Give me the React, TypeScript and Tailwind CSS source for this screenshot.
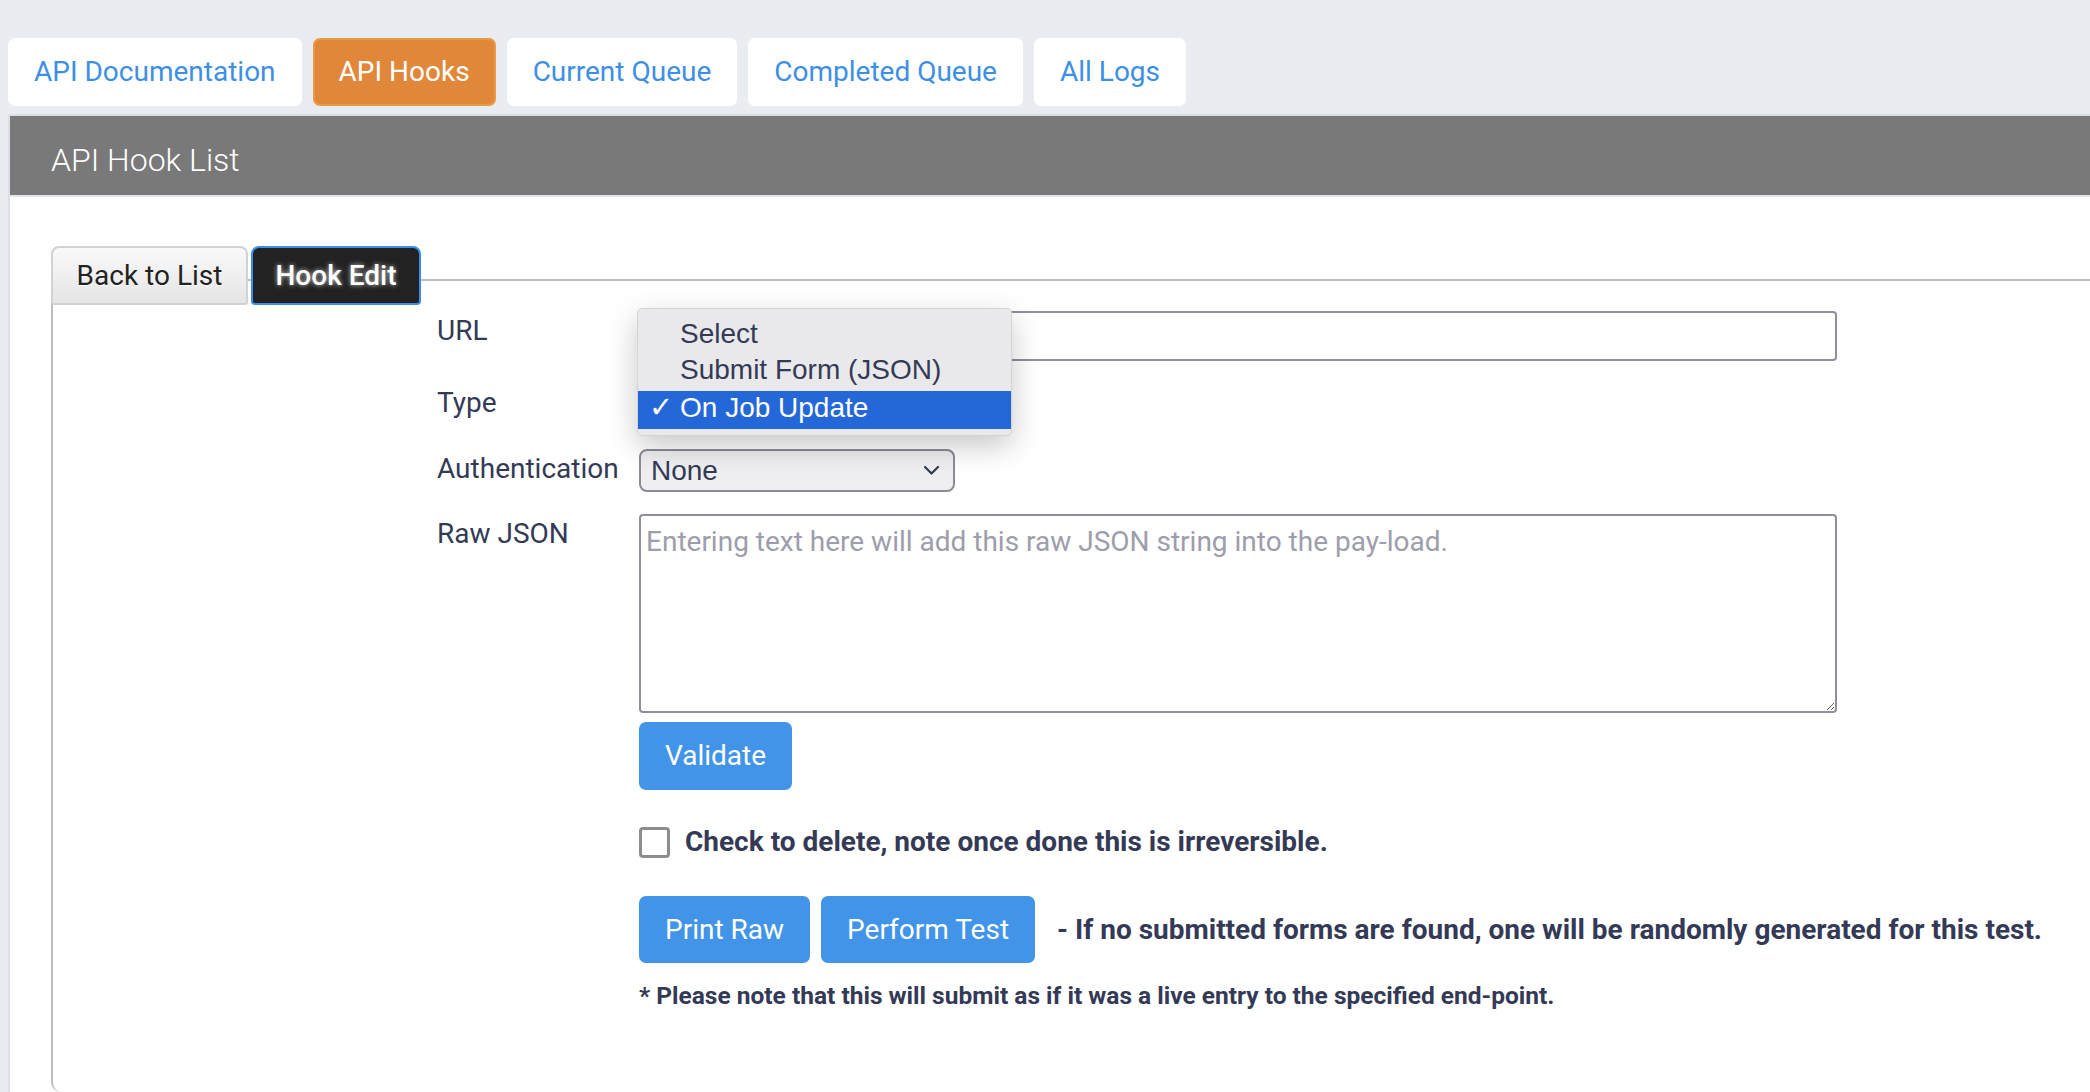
import React from "react";

const NAV = ["API Documentation", "API Hooks", "Current Queue", "Completed Queue", "All Logs"];

function Chevron() {
  return (
    <svg width="17" height="11" viewBox="0 0 17 11" fill="none">
      <path d="M2 2 L8.5 8.5 L15 2" stroke="#343a56" strokeWidth="2.2" strokeLinecap="round" strokeLinejoin="round" />
    </svg>
  );
}

function FakeSelect({ value, width }: { value: string; width: string }) {
  return (
    <div
      className={`${width} h-[43px] flex items-center justify-between pl-[10px] pr-[13px] rounded-[8px] border-2 border-[#8b8b96] bg-[#efeff1] text-[28px] text-[#343a56] font-['Liberation_Sans',Arial,sans-serif]`}
    >
      <span className="leading-none">{value}</span>
      <Chevron />
    </div>
  );
}

function Label({ children }: { children: React.ReactNode }) {
  return <div className="w-[202px] shrink-0 pt-[3px] text-[28px] leading-[34px] text-[#343a56]">{children}</div>;
}

export default function App() {
  return (
    <div className="w-[2090px] h-[1092px] overflow-hidden bg-[#e9ecf1] font-['Roboto',sans-serif] flex flex-col">
      {/* top nav */}
      <div className="flex gap-[11px] pl-[8px] pt-[38px]">
        {NAV.map((t) => (
          <div
            key={t}
            className={
              t === "API Hooks"
                ? "h-[68px] px-[24px] flex items-center rounded-[7px] bg-[#e0873a] border-2 border-[#e99a45] text-white text-[28px]"
                : "h-[68px] px-[26px] flex items-center rounded-[7px] bg-white text-[#3d8fe6] text-[28px]"
            }
          >
            {t}
          </div>
        ))}
      </div>

      {/* panel */}
      <div className="mt-[8px] ml-[8px] flex-1 bg-white border-l-2 border-t-2 border-[#dce0e6] flex flex-col">
        <div className="h-[81px] bg-[#797979] border-b-2 border-[#e4e7eb] flex items-center pl-[41px] pt-[8px] text-white text-[32px] font-light">
          API Hook List
        </div>

        <div className="pl-[41px] pt-[49px] flex-1 flex flex-col">
          {/* inner tabs */}
          <div className="relative z-10 flex gap-[3px] h-[59px]">
            <div className="w-[197px] h-[59px] flex items-center justify-center rounded-t-[8px] rounded-b-[3px] border-2 border-[#d2d2d2] bg-linear-to-b from-[#f9f9f9] to-[#e5e5e5] text-[28px] text-[#222] [text-shadow:0_1px_0_#fff]">
              Back to List
            </div>
            <div className="w-[170px] h-[59px] flex items-center justify-center rounded-t-[8px] rounded-b-[4px] border-2 border-[#3b8ee6] bg-[#222] text-[28px] font-medium text-white [text-shadow:0_0_5px_rgba(255,255,255,0.75)]">
              Hook Edit
            </div>
          </div>

          {/* content box */}
          <div className="-mt-[26px] flex-1 border-t-2 border-l-2 border-[#bdbdbd] rounded-bl-[10px] pt-[30px] pl-[384px] text-[#343a56]">
            {/* URL */}
            <div className="flex items-start">
              <Label>URL</Label>
              <div className="w-[1198px] h-[50px] rounded-[4px] border-2 border-[#8f8f99] bg-white" />
            </div>

            {/* Type: select sits under its open option list */}
            <div className="flex items-start mt-[22px]">
              <Label>Type</Label>
              <div className="relative">
                <FakeSelect value="" width="w-[316px]" />
                <div className="absolute left-[-2px] top-[-75px] w-[375px] h-[128px] pt-[10px] rounded-[5px] bg-[#e9e9eb] border border-[#d4d4d6] shadow-[0_10px_30px_rgba(0,0,0,0.22)] font-['Liberation_Sans',Arial,sans-serif] text-[28px] text-[#343a56]">
                  <div className="h-[36px] leading-[30px] pl-[42px]">Select</div>
                  <div className="h-[36px] leading-[30px] pl-[42px]">Submit Form (JSON)</div>
                  <div className="h-[38px] leading-[33px] bg-[#2467d9] text-white flex">
                    <span className="w-[42px] pl-[11px] font-['DejaVu_Sans',sans-serif] text-[29px] font-bold">✓</span>
                    <span>On Job Update</span>
                  </div>
                </div>
              </div>
            </div>

            {/* Authentication */}
            <div className="flex items-start mt-[23px]">
              <Label>Authentication</Label>
              <FakeSelect value="None" width="w-[316px]" />
            </div>

            {/* Raw JSON */}
            <div className="flex items-start mt-[22px]">
              <Label>Raw JSON</Label>
              <div className="flex flex-col">
                <textarea
                  className="w-[1198px] h-[199px] rounded-[4px] border-2 border-[#8f8f99] bg-white px-[5px] pt-[9px] pb-[4px] text-[28px] leading-[34px] text-[#343a56] placeholder:text-[#9d9dab] outline-none"
                  placeholder="Entering text here will add this raw JSON string into the pay-load."
                />
                <div className="mt-[9px]">
                  <button className="h-[68px] px-[26px] rounded-[7px] bg-[#4194e8] text-white text-[28px]">Validate</button>
                </div>

                <div className="mt-[31px] flex items-center">
                  <div className="w-[31px] h-[31px] rounded-[4px] border-[3px] border-[#8d8d8d] bg-white" />
                  <span className="ml-[15px] text-[28px] font-bold text-[#343a56]">
                    Check to delete, note once done this is irreversible.
                  </span>
                </div>

                <div className="mt-[33px] flex items-center">
                  <button className="h-[67px] px-[26px] rounded-[7px] bg-[#4194e8] text-white text-[28px]">Print Raw</button>
                  <button className="ml-[11px] h-[67px] px-[26px] rounded-[7px] bg-[#4194e8] text-white text-[28px]">Perform Test</button>
                  <span className="ml-[22px] text-[28px] font-bold text-[#343a56] whitespace-nowrap">
                    - If no submitted forms are found, one will be randomly generated for this test.
                  </span>
                </div>

                <div className="mt-[15px] text-[24.5px] font-bold text-[#343a56] whitespace-nowrap">
                  * Please note that this will submit as if it was a live entry to the specified end-point.
                </div>
              </div>
            </div>
          </div>
        </div>
      </div>
    </div>
  );
}
